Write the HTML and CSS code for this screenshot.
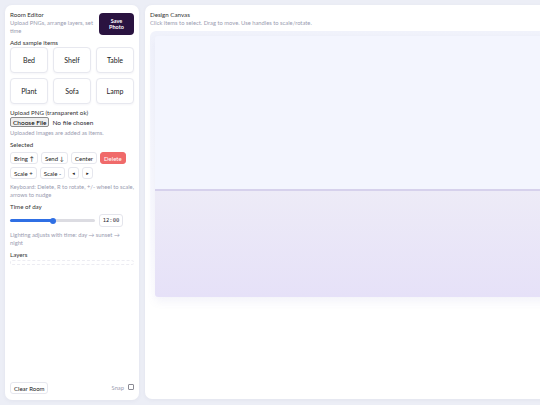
FILE: index.html
```html
<!DOCTYPE html>
<html lang="en">
<head>
    <meta charset="UTF-8">
    <meta name="viewport" content="width=device-width, initial-scale=1.0">
    <title>Room Editor</title>
    <link rel="stylesheet" href="styles.css">
</head>
<body>
    <div class="app">
        <aside class="sidebar">
            <div class="side-head">
                <div class="side-title">
                    <div class="title">Room Editor</div>
                    <div class="muted">Upload PNGs, arrange layers, set time</div>
                </div>
                <button class="save-btn">Save Photo</button>
            </div>

            <div class="label">Add sample items</div>
            <div class="items">
                <button class="item">Bed</button>
                <button class="item">Shelf</button>
                <button class="item">Table</button>
                <button class="item">Plant</button>
                <button class="item">Sofa</button>
                <button class="item">Lamp</button>
            </div>

            <div class="label upload-label">Upload PNG (transparent ok)</div>
            <input type="file" class="file-input" accept="image/png">
            <div class="muted">Uploaded images are added as items.</div>

            <div class="label">Selected</div>
            <div class="tools">
                <button class="tool">Bring ↑</button>
                <button class="tool">Send ↓</button>
                <button class="tool">Center</button>
                <button class="tool danger">Delete</button>
            </div>
            <div class="tools">
                <button class="tool">Scale +</button>
                <button class="tool">Scale -</button>
                <button class="tool arrow">◂</button>
                <button class="tool arrow">▸</button>
            </div>
            <div class="muted">Keyboard: Delete, R to rotate, +/- wheel to scale, arrows to nudge</div>

            <div class="label">Time of day</div>
            <div class="time-row">
                <input type="range" class="time-slider" min="0" max="24" value="12">
                <span class="time-box">12:00</span>
            </div>
            <div class="muted">Lighting adjusts with time: day → sunset → night</div>

            <div class="label">Layers</div>
            <div class="layers"></div>

            <div class="side-foot">
                <button class="tool clear">Clear Room</button>
                <label class="snap">Snap <input type="checkbox"></label>
            </div>
        </aside>

        <main class="stage-panel">
            <div class="title">Design Canvas</div>
            <div class="muted">Click items to select. Drag to move. Use handles to scale/rotate.</div>
            <div class="stage-wrap">
                <div class="stage">
                    <div class="wall"></div>
                    <div class="floor"></div>
                </div>
            </div>
        </main>
    </div>
</body>
</html>
```

FILE: styles.css
```css
body {
    margin: 0;
    background: #eceef6;
    font-family: Lato, "DejaVu Sans", Arial, sans-serif;
    font-size: 5.8px;
    line-height: 8px;
    color: #2c2c36;
    overflow: hidden;
}
button {
    font-family: inherit;
    cursor: pointer;
    white-space: nowrap;
}
.app {
    display: flex;
    gap: 6px;
    padding: 5px;
    height: 405px;
    box-sizing: border-box;
}
.sidebar {
    width: 134px;
    flex: none;
    background: #fff;
    border-radius: 7px;
    padding: 6px 5px 6px 5px;
    box-sizing: border-box;
    display: flex;
    flex-direction: column;
    box-shadow: 0 1px 4px rgba(60, 60, 110, 0.06);
}
.side-head {
    display: flex;
    justify-content: space-between;
    align-items: flex-start;
    gap: 3px;
}
.side-title {
    flex: 1;
}
.title {
    color: #333;
    font-size: 6.2px;
}
.muted {
    color: #9a9cb0;
}
.save-btn {
    width: 35px;
    height: 22px;
    flex: none;
    margin-top: 2px;
    background: #2a1340;
    color: #fff;
    border: none;
    border-radius: 4px;
    font-size: 5.5px;
    font-weight: 700;
    line-height: 6.5px;
    padding: 0 8px;
    white-space: normal;
}
.label {
    margin-top: 4px;
    color: #333;
    font-size: 6.2px;
}
.items {
    display: grid;
    grid-template-columns: repeat(3, 1fr);
    grid-auto-rows: 26px;
    gap: 5px;
}
.item {
    background: #fff;
    border: 1px solid #e7e8ef;
    border-radius: 4px;
    font-size: 7px;
    color: #222;
    padding: 0;
    box-shadow: 0 1px 2px rgba(60, 60, 110, 0.05);
}
.upload-label {
    margin-top: 5px;
}
.file-input {
    font-family: inherit;
    font-size: 6.5px;
    height: 10px;
    margin: 0 0 2px 0;
    width: 110px;
}
.file-input::file-selector-button {
    font-family: inherit;
    font-size: 6.5px;
    padding: 0 2px;
    margin-right: 3px;
    height: 10px;
    border: 1px solid #8c8c8c;
    border-radius: 2px;
    background: #efefef;
}
.tools {
    display: flex;
    gap: 3px;
    margin-top: 3px;
}
.tool {
    height: 12px;
    padding: 0 3px;
    background: #fff;
    border: 1px solid #e6e7ee;
    border-radius: 3px;
    font-size: 6px;
    color: #222;
}
.tool.danger {
    background: #f06a6a;
    border-color: #f06a6a;
    color: #fff;
}
.tool.arrow {
    width: 11px;
    padding: 0;
    font-size: 5px;
}
.tools + .muted {
    margin-top: 4px;
}
.time-row {
    display: flex;
    align-items: center;
    gap: 4px;
    margin-top: 3px;
}
.time-slider {
    -webkit-appearance: none;
    appearance: none;
    width: 85px;
    height: 3px;
    margin: 0;
    border-radius: 2px;
    background: linear-gradient(to right, #2f6fe4 50%, #dcdce2 50%);
}
.time-slider::-webkit-slider-thumb {
    -webkit-appearance: none;
    width: 6px;
    height: 6px;
    border-radius: 50%;
    background: #2f6fe4;
}
.time-box {
    width: 24px;
    height: 13px;
    box-sizing: border-box;
    border: 1px solid #e4e5ec;
    border-radius: 3px;
    font-family: "DejaVu Sans Mono", "Liberation Mono", monospace;
    font-size: 5.5px;
    line-height: 11px;
    text-align: center;
}
.time-row + .muted {
    margin-top: 4px;
}
.layers {
    height: 3px;
    margin-top: 1px;
    border: 1px dashed #ececf2;
    border-radius: 3px;
}
.side-foot {
    margin-top: auto;
    display: flex;
    justify-content: space-between;
    align-items: center;
}
.tool.clear {
    padding: 0 3px;
}
.snap {
    display: flex;
    align-items: center;
    gap: 4px;
    color: #9a9cb0;
}
.snap input {
    -webkit-appearance: none;
    appearance: none;
    width: 6px;
    height: 6px;
    margin: 0 0 2px 0;
    border: 1px solid #8a8a94;
    border-radius: 1px;
    background: #fff;
}
.stage-panel {
    width: 600px;
    flex: none;
    background: #fff;
    border-radius: 7px;
    padding: 6px 5px;
    box-sizing: border-box;
    margin-bottom: 1px;
    box-shadow: 0 1px 4px rgba(60, 60, 110, 0.06);
}
.stage-wrap {
    margin-top: 4px;
    padding: 5px;
    border-radius: 6px;
    background: linear-gradient(#f0f2fb, #fbfbfe 80%, #fff);
}
.stage {
    height: 261px;
    border-radius: 3px;
    overflow: hidden;
    display: flex;
    flex-direction: column;
    box-shadow: 0 5px 8px rgba(120, 110, 190, 0.08);
}
.wall {
    height: 153px;
    background: #f3f5fe;
    border-bottom: 2px solid #d6d1ec;
}
.floor {
    flex: 1;
    background: linear-gradient(#edebf7, #e6e1f8);
}
```
